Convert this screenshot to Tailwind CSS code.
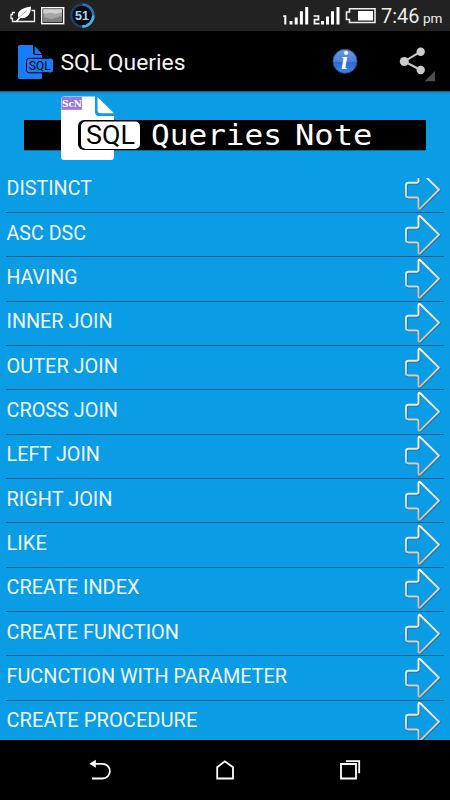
<!DOCTYPE html>
<html lang="en">
<head>
  <meta charset="UTF-8" />
  <title>SQL Queries</title>
  <script src="https://cdn.jsdelivr.net/npm/@tailwindcss/browser@4"></script>
</head>
<body class="bg-black">
  <div class="flex h-[800px] w-[450px] flex-col overflow-hidden bg-black font-[Roboto,sans-serif]">

    <!-- status bar -->
    <div class="flex h-[31px] shrink-0 items-center justify-between bg-[#222222]">
      <svg class="h-[31px] w-[100px]" viewBox="0 0 100 31">
        <path d="M15 12.500h-2.500v2h-1.500v4h1.500v3h22v-11h-3" fill="none" stroke="#eee" stroke-width="1.300" />
        <path d="M15.500 21.500l3-4c-2-5 1-9 12.500-11 0 8-4 12.500-10.500 11.500l-3.500 4z" fill="#fff" />
        <path d="M19 17.500q4-4 8-7" fill="none" stroke="#888" stroke-width=".7" />
        <rect x="41.700" y="7.700" width="22" height="16" fill="#222" stroke="#fff" stroke-width="1.400" />
        <rect x="43.300" y="9.300" width="18.800" height="12.800" fill="#a5a5a5" />
        <path d="M43.300 9.300h18.800v3l-6 1.500-6-1-6.800 1z" fill="#d0d0d0" />
        <path d="M43.300 17l8 2 10.800-3v6h-18.800z" fill="#828282" />
        <circle cx="82.300" cy="15.500" r="11" fill="#050b12" stroke="#17435f" stroke-width="2.500" />
        <path d="M82.300 26.500a11 11 0 1 0 0-22" fill="none" stroke="#2872b0" stroke-width="2.500" />
        <path d="M82.300 26.500a11 11 0 0 0 11-11" fill="none" stroke="#4fb0ee" stroke-width="2.500" />
        <text x="75" y="20.200" textLength="14" font-family="'Liberation Sans', sans-serif" font-weight="700" font-size="12.500" fill="#a3d8fb">51</text>
      </svg>
      <svg class="h-[31px] w-[170px]" viewBox="280 0 170 31">
        <g fill="#fff">
          <path d="M289.500 21h3v3.500h-3zM294.700 17.500h3v7h-3zM299.900 11.300h3v13.200h-3zM305.200 7h3v17.500h-3z" />
          <path d="M321 21h3v3.500h-3zM326 16.500h3v8h-3zM331 11.300h3v13.200h-3zM336.500 7h3v17.500h-3z" />
          <path d="M283.300 17v-1.700h3v9.200h-2V17z" />
        </g>
        <path d="M313.500 16h5v3.700h-4v4h5" fill="none" stroke="#fff" stroke-width="1.700" />
        <path d="M349.500 8.700h25.500v13.800h-25.500v-3h-3v-7.500h3z" fill="#222" stroke="#eee" stroke-width="1.600" />
        <rect x="358" y="11" width="15" height="9.500" fill="#fff" />
        <text x="381" y="23" textLength="38.500" lengthAdjust="spacingAndGlyphs" font-family="Roboto, sans-serif" font-size="20" fill="#ececec">7:46</text>
        <text x="423" y="23" textLength="19.500" lengthAdjust="spacingAndGlyphs" font-family="Roboto, sans-serif" font-size="13.500" fill="#ececec">pm</text>
      </svg>
    </div>

    <!-- action bar -->
    <header class="flex h-[60px] shrink-0 items-center bg-black">
      <svg class="h-[60px] w-[61px]" viewBox="0 31 61 60">
        <path d="M19.500 45H33v7q0 3 3 3h6v22.500q0 1.500-1.500 1.500h-21q-1.500 0-1.500-1.500v-31q0-1.500 1.500-1.500z" fill="#167dfc" />
        <path d="M34.700 46l7.300 8h-5.800q-1.500 0-1.500-1.500z" fill="#167dfc" />
        <rect x="26.500" y="58.500" width="26.500" height="14" rx="2.500" fill="#167dfc" />
        <path d="M49 58.300H29q-2.500 0-2.500 2.500v9.500q0 2.500 2.500 2.500H49" fill="none" stroke="#000" />
        <text x="29" y="70" textLength="21.500" lengthAdjust="spacingAndGlyphs" font-family="Roboto, sans-serif" font-size="12.500" fill="#000">SQL</text>
      </svg>
      <h1 class="text-white">
        <svg class="h-[60px] w-[130px]" viewBox="61 31 130 60">
          <text x="60.500" y="69.500" textLength="125" lengthAdjust="spacingAndGlyphs" font-family="Roboto, sans-serif" font-size="22" fill="#f3f3f3">SQL Queries</text>
        </svg>
      </h1>
      <svg class="ml-auto h-[60px] w-[130px]" viewBox="320 31 130 60">
        <defs>
          <linearGradient id="info" x2="0" y2="1">
            <stop offset="0" stop-color="#6d9be0" />
            <stop offset=".5" stop-color="#4a83d8" />
            <stop offset=".55" stop-color="#2b6bd0" />
            <stop offset="1" stop-color="#4284e2" />
          </linearGradient>
        </defs>
        <circle cx="345" cy="61.300" r="12" fill="url(#info)" stroke="#234f9c" />
        <text x="341" y="69" font-family="'Liberation Serif', serif" font-weight="700" font-style="italic" font-size="25" fill="#fff">i</text>
        <path d="M420.700 51.700L404.300 61.500l16.400 8.500" fill="none" stroke="#ccc" stroke-width="2" />
        <circle cx="420.700" cy="51.700" r="4.200" fill="#ccc" />
        <circle cx="404.300" cy="61.500" r="4.500" fill="#ccc" />
        <circle cx="420.700" cy="70" r="4.200" fill="#ccc" />
        <path d="M435 71v10.300h-10.500z" fill="#4d4d4d" />
      </svg>
    </header>

    <main class="flex h-[649px] shrink-0 flex-col bg-[#0a9ce4]">
      <!-- banner -->
      <svg class="h-[87px] w-[450px] shrink-0" viewBox="0 91 450 87">
        <path d="M0 91.500h450" stroke="#0d6493" />
        <path d="M0 93h450" stroke="#0c91d3" stroke-width="2" />
        <rect x="24" y="120" width="402" height="30.300" fill="#000" />
        <path d="M64 96.500h31v15.500q0 4 4 4h15v41q0 3-3 3H64q-3 0-3-3v-57.500q0-3 3-3z" fill="#fff" />
        <path d="M97.500 97l16.500 16.300h-13.500q-3 0-3-3z" fill="#fff" />
        <rect x="61.500" y="97" width="20.500" height="12.800" fill="#9a78e4" />
        <text x="62" y="107" textLength="20" lengthAdjust="spacingAndGlyphs" font-family="'DejaVu Serif', serif" font-weight="700" font-size="10" fill="#fff">ScN</text>
        <rect x="78" y="120" width="60" height="30" rx="6" fill="#000" />
        <rect x="81" y="121.500" width="59" height="27.500" rx="5" fill="#fff" />
        <text x="86" y="143.800" textLength="49" lengthAdjust="spacingAndGlyphs" font-family="Roboto, sans-serif" font-size="25" fill="#000">SQL</text>
        <g font-family="'DejaVu Sans Mono', monospace" font-size="29" fill="#fff">
          <text x="151" y="145" textLength="131" lengthAdjust="spacingAndGlyphs">Queries</text>
          <text x="295" y="145" textLength="77.500" lengthAdjust="spacingAndGlyphs">Note</text>
        </g>
      </svg>

      <!-- query list, scrolled by a few pixels -->
      <div class="h-[562px] overflow-hidden px-1.5">
        <ul id="queries" class="-mt-[9.500px]"></ul>
      </div>
    </main>

    <!-- navigation bar -->
    <nav class="flex h-[60px] shrink-0 items-center bg-black">
      <svg class="h-[60px] w-[450px]" viewBox="0 740 450 60" fill="none" stroke="#fff" stroke-width="1.800">
        <path d="M93 763.800h9.500a7.300 7.300 0 0 1 0 14.700H92" />
        <path d="M89.300 763.800l6.500-4v8z" fill="#fff" stroke="none" />
        <path d="M217.200 778.500v-11.200l7.600-6 8.200 6v11.200z" />
        <path d="M341 764h15v14.500h-15zM346 761.200h13.200v12" />
      </svg>
    </nav>
  </div>

  <script>
    const queries = [
      { name: 'DISTINCT', width: 85.5 },
      { name: 'ASC DSC', width: 79.5 },
      { name: 'HAVING', width: 71 },
      { name: 'INNER JOIN', width: 106 },
      { name: 'OUTER JOIN', width: 111.5 },
      { name: 'CROSS JOIN', width: 111.5 },
      { name: 'LEFT JOIN', width: 93.5 },
      { name: 'RIGHT JOIN', width: 106 },
      { name: 'LIKE', width: 40.5 },
      { name: 'CREATE INDEX', width: 133 },
      { name: 'CREATE FUNCTION', width: 172.5 },
      { name: 'FUCNCTION WITH PARAMETER', width: 280.5 },
      { name: 'CREATE PROCEDURE', width: 191 },
    ];

    const arrow = 'M13 12V2.500Q13 0 15 1.800L33.500 20L15 38.500Q13 40 13 37.500V29.500Q13 27.800 11 27.800H3Q.5 27.800 .5 25.500V15.500Q.5 13 3 13H11Q13 13 13 11.500Z';

    document.getElementById('queries').innerHTML = queries.map((q, i) => `
      <li class="flex h-[44.370px] items-center justify-between border-b border-[#075f8d]">
        <svg class="h-[30px] w-[300px]" viewBox="0 0 300 30">
          <text x="0.500" y="20.200" textLength="${q.width}" lengthAdjust="spacingAndGlyphs" font-family="Roboto, sans-serif" font-size="19.300" fill="#eef8fe">${q.name}</text>
        </svg>
        <svg class="mr-[3px] h-[42px] w-[37px]" viewBox="-1.500 -.7 37 42" fill="none" stroke-linejoin="round">
          <defs>
            <linearGradient id="metal${i}" x2="0" y2="1">
              <stop offset="0" stop-color="#fff" />
              <stop offset=".5" stop-color="#dcdcdc" />
              <stop offset="1" stop-color="#bdbdbd" />
            </linearGradient>
          </defs>
          <path d="${arrow}" transform="translate(.7 .7)" stroke="#35687f" stroke-width="2" />
          <path d="${arrow}" stroke="url(#metal${i})" stroke-width="1.900" />
        </svg>
      </li>`).join('');
  </script>
</body>
</html>
